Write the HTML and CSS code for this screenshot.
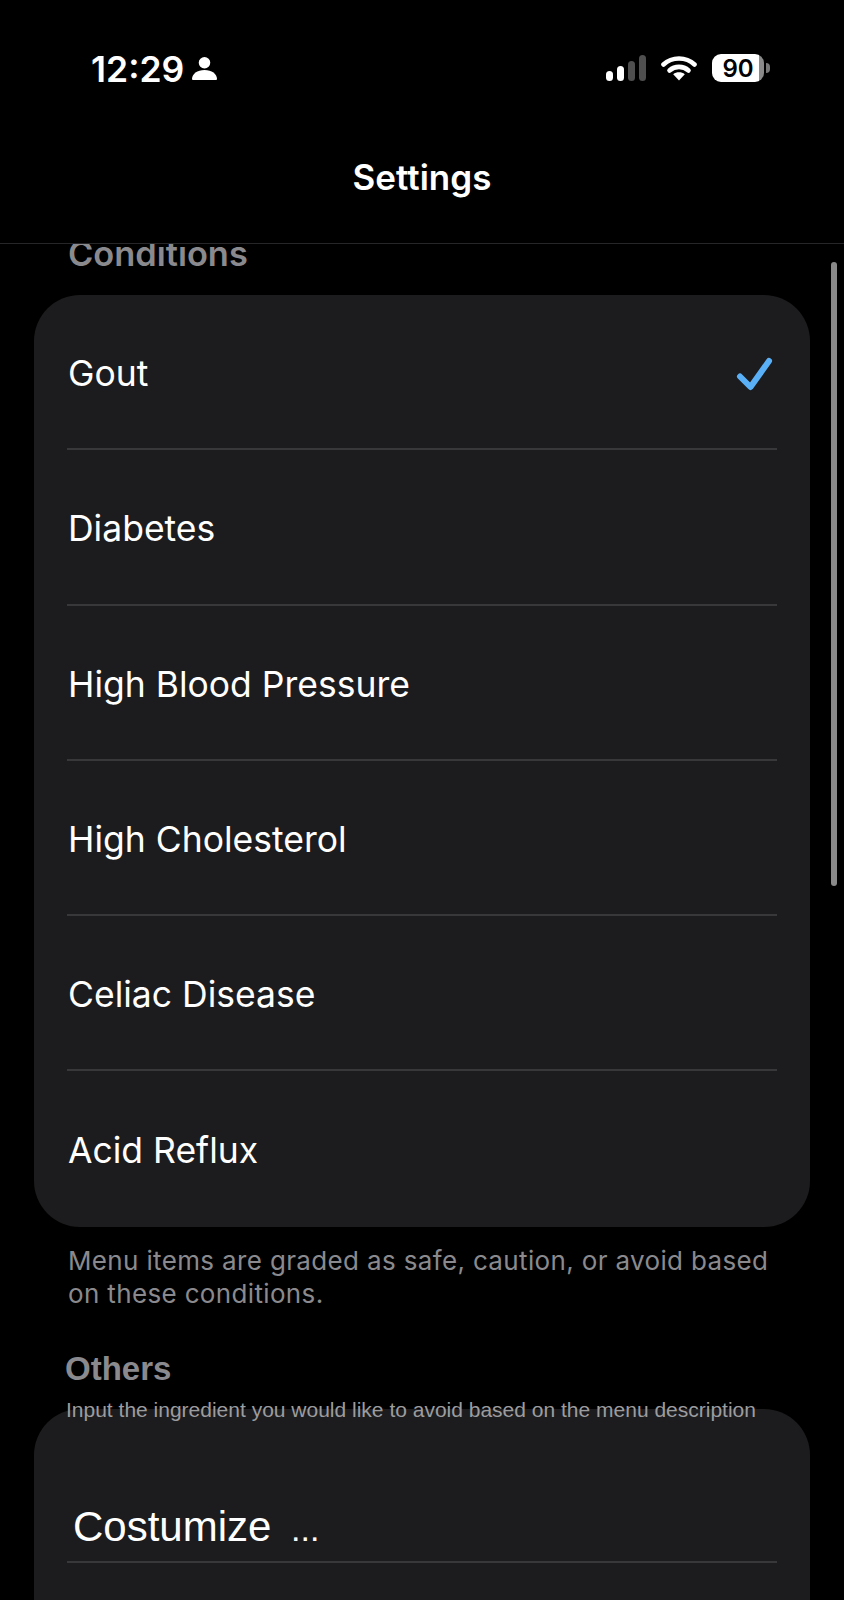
FILE: index.html
```html
<!DOCTYPE html>
<html>
<head>
    <title>Settings</title>
    <link rel="stylesheet" href="styles.css">
</head>
<body>
    <div class="screen">
        <header class="top">
            <div class="status-bar">
                <div class="status-left">
                    <span class="time">12:29</span>
                    <svg class="person" width="25" height="25" viewBox="0 0 26 26">
                        <circle cx="13" cy="7" r="6" fill="#fff"/>
                        <path d="M1 25c-.6 0-1-.4-1-1 0-5.500 5.500-9.500 13-9.500s13 4 13 9.500c0 .6-.4 1-1 1z" fill="#fff"/>
                    </svg>
                </div>
                <div class="status-right">
                    <div class="signal">
                        <span class="bar bar-1"></span>
                        <span class="bar bar-2"></span>
                        <span class="bar bar-3"></span>
                        <span class="bar bar-4"></span>
                    </div>
                    <svg class="wifi" width="36" height="26" viewBox="0 0 36 26">
                        <path d="M2.500 9.500C11 1.500 25 1.500 33.500 9.500" fill="none" stroke="#fff" stroke-width="4.600" stroke-linecap="round"/>
                        <path d="M8.500 15.500C13.800 10.700 22.200 10.700 27.500 15.500" fill="none" stroke="#fff" stroke-width="4.600" stroke-linecap="round"/>
                        <path d="M18 25.500l-5.800-6.200c3.300-2.600 8.300-2.600 11.600 0z" fill="#fff"/>
                    </svg>
                    <div class="battery">
                        <div class="battery-body"><span class="battery-level">90</span></div>
                        <span class="battery-nub"></span>
                    </div>
                </div>
            </div>
            <div class="nav-title">Settings</div>
        </header>

        <main class="content">
            <h2 class="section-title">Conditions</h2>
            <div class="card">
                <div class="row">
                    <span>Gout</span>
                    <svg class="check" width="38" height="36" viewBox="0 0 38 36">
                        <path d="M4 20.500L14.500 31 33 5" fill="none" stroke="#5ab0f6" stroke-width="6" stroke-linecap="round" stroke-linejoin="round"/>
                    </svg>
                </div>
                <div class="row"><span>Diabetes</span></div>
                <div class="row"><span>High Blood Pressure</span></div>
                <div class="row"><span>High Cholesterol</span></div>
                <div class="row"><span>Celiac Disease</span></div>
                <div class="row"><span>Acid Reflux</span></div>
            </div>
            <p class="caption">Menu items are graded as safe, caution, or avoid based on these conditions.</p>

            <h2 class="others-title">Others</h2>
            <p class="others-hint">Input the ingredient you would like to avoid based on the menu description</p>
            <div class="card card-custom">
                <div class="custom-row">Costumize <span class="dots">...</span></div>
            </div>

            <div class="scrollbar"></div>
        </main>
    </div>
</body>
</html>
```

FILE: styles.css
```css
body {
    margin: 0;
    background-color: #000000;
    color: #ffffff;
    font-family: Inter, "Liberation Sans", sans-serif;
}

.screen {
    width: 844px;
    height: 1600px;
    overflow: hidden;
    display: flex;
    flex-direction: column;
}

/* Status bar and title */
.top {
    border-bottom: 1px solid #262628;
    height: 243px;
    flex-shrink: 0;
}

.status-bar {
    height: 136px;
    display: flex;
    justify-content: space-between;
    align-items: center;
    padding: 0 74px 0 91px;
}

.status-left {
    display: flex;
    align-items: center;
    gap: 8px;
    padding-top: 3px;
}

.time {
    font-size: 35.500px;
    font-weight: 600;
    line-height: 44px;
}

.person {
    margin-top: -2px;
}

.status-right {
    display: flex;
    align-items: center;
    gap: 15px;
}

.signal {
    display: flex;
    align-items: flex-end;
    gap: 4px;
    height: 26px;
}

.bar {
    width: 7px;
    border-radius: 4px;
    background-color: #ffffff;
}

.bar-1 {
    height: 10px;
}

.bar-2 {
    height: 15px;
}

.bar-3 {
    height: 20px;
    background-color: #4f4f4f;
}

.bar-4 {
    height: 26px;
    background-color: #4f4f4f;
}

.battery {
    display: flex;
    align-items: center;
    gap: 2px;
}

.battery-body {
    width: 52px;
    height: 28px;
    border-radius: 9px;
    background: linear-gradient(90deg, #ffffff 90%, #8a8a8a 90%);
    display: flex;
    align-items: center;
    justify-content: center;
}

.battery-level {
    color: #000000;
    font-size: 24px;
    font-weight: 600;
    line-height: 28px;
    padding-top: 1px;
}

.battery-nub {
    width: 4px;
    height: 10px;
    border-radius: 0 4px 4px 0;
    background-color: #777777;
}

.nav-title {
    height: 82px;
    line-height: 82px;
    text-align: center;
    font-size: 35px;
    font-weight: 600;
}

/* Scrolling list */
.content {
    position: relative;
    flex: 1;
    overflow: hidden;
    padding: 0 34px;
}

.section-title {
    margin: -10px 0 21px 34px;
    font-size: 34.400px;
    line-height: 40px;
    font-weight: 600;
    color: #8a8a8e;
}

.card {
    background-color: #1c1c1e;
    border-radius: 46px;
}

.row {
    height: 155.300px;
    box-sizing: border-box;
    margin: 0 33px;
    padding: 4px 0 0 1px;
    display: flex;
    align-items: center;
    justify-content: space-between;
    font-size: 35.500px;
    border-bottom: 2px solid #38383a;
}

.row:last-child {
    border-bottom-color: transparent;
}

.check {
    margin-right: 3px;
}

.caption {
    margin: 17px 30px 0 34px;
    font-size: 26px;
    line-height: 33px;
    letter-spacing: 0.350px;
    color: #8a8a8e;
}

.others-title {
    margin: 39px 0 0 31px;
    font-family: "Liberation Sans", sans-serif;
    font-size: 33px;
    line-height: 40px;
    font-weight: 700;
    color: #8a8a8e;
}

.others-hint {
    position: relative;
    z-index: 1;
    margin: 7px 0 0 32px;
    font-family: "Liberation Sans", sans-serif;
    font-size: 21px;
    line-height: 28px;
    color: #9c9c9f;
    white-space: nowrap;
}

.card-custom {
    margin-top: -15px;
    height: 300px;
    padding: 0 33px;
}

.custom-row {
    height: 154px;
    box-sizing: border-box;
    padding: 93px 0 0 6px;
    font-family: "Liberation Sans", sans-serif;
    font-size: 42px;
    line-height: 50px;
    border-bottom: 2px solid #38383a;
}

.dots {
    font-size: 34px;
    margin-left: 8px;
}

.scrollbar {
    position: absolute;
    right: 7px;
    top: 18px;
    width: 6px;
    height: 624px;
    border-radius: 3px;
    background-color: #8a8a8a;
}
```
